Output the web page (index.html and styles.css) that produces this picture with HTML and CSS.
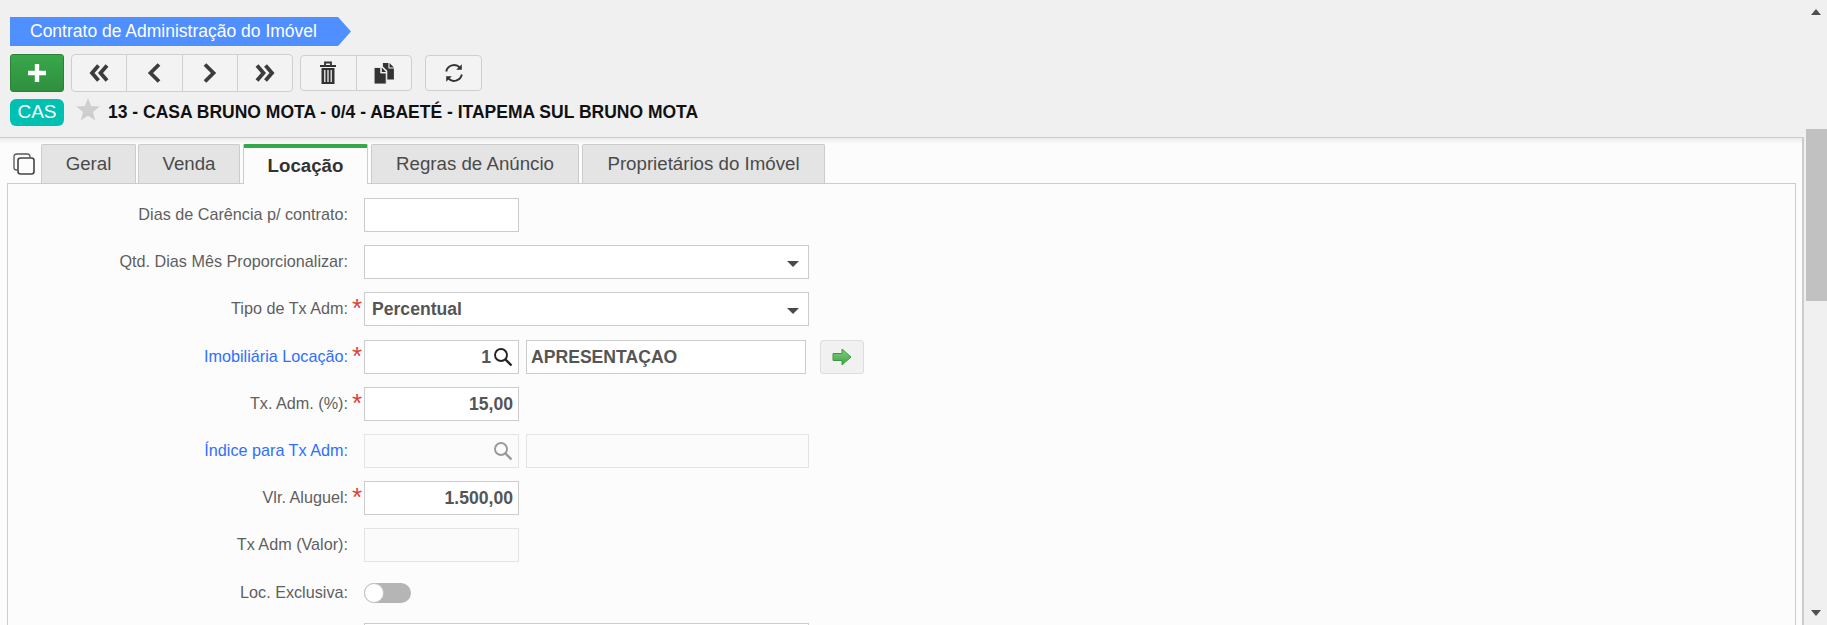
FILE: index.html
```html
<!DOCTYPE html>
<html lang="pt-BR">
<head>
<meta charset="utf-8">
<title>Contrato de Administração do Imóvel</title>
<link rel="stylesheet" href="styles.css">
</head>
<body>
<div class="page">
  <div class="main">
    <header class="header">
      <div class="ribbon">Contrato de Administração do Imóvel</div>
      <div class="toolbar">
        <button class="btn-add"><svg width="20" height="20" viewBox="0 0 20 20"><path d="M10 1v18M1 10h18" stroke="#fff" stroke-width="4.4" fill="none"/></svg></button>
        <div class="group group-nav">
          <button class="btn"><svg width="22" height="20" viewBox="0 0 22 20"><path d="M10.500 2.500 4 10l6.500 7.500M19 2.500 12.500 10l6.500 7.500" stroke="#3c3c3c" stroke-width="3.800" fill="none"/></svg></button>
          <button class="btn"><svg width="14" height="20" viewBox="0 0 14 20"><path d="M12 1.500 3.500 10l8.500 8.500" stroke="#3c3c3c" stroke-width="3.800" fill="none"/></svg></button>
          <button class="btn"><svg width="14" height="20" viewBox="0 0 14 20"><path d="M2 1.500 10.500 10 2 18.500" stroke="#3c3c3c" stroke-width="3.800" fill="none"/></svg></button>
          <button class="btn"><svg width="22" height="20" viewBox="0 0 22 20"><path d="M3 2.500 9.500 10 3 17.500M11.500 2.500 18 10l-6.500 7.500" stroke="#3c3c3c" stroke-width="3.800" fill="none"/></svg></button>
        </div>
        <div class="group group-edit">
          <button class="btn"><svg width="18" height="24" viewBox="0 0 18 24"><path d="M1 5h16M6 4.500V1.500h6v3" stroke="#333" stroke-width="1.800" fill="none"/><path d="M2.500 7h13v16h-13z" fill="#333"/><path d="M5.800 9v12M9 9v12M12.200 9v12" stroke="#f0f0f0" stroke-width="1.300"/></svg></button>
          <button class="btn"><svg width="22" height="22" viewBox="0 0 20 20"><path d="M9 1h5v5h5v10h-6V8L9 4z" fill="#333"/><path d="M15 1l4 4h-4z" fill="#333"/><path d="M1 5h6v5h5v10H1z" fill="#333" stroke="#f0f0f0" stroke-width=".8"/><path d="M8 5l4 4H8z" fill="#333"/></svg></button>
        </div>
        <div class="group group-refresh">
          <button class="btn"><svg width="20" height="20" viewBox="0 0 20 20"><path d="M2.200 8.500A8 8 0 0 1 16 4.800M17.800 11.500A8 8 0 0 1 4 15.200" stroke="#333" stroke-width="1.900" fill="none"/><path d="M17.800 1.200v5.600h-5.600zM2.200 18.800v-5.600h5.600z" fill="#333"/></svg></button>
        </div>
      </div>
      <div class="record">
        <span class="badge">CAS</span>
        <svg class="star" width="24" height="24" viewBox="0 0 24 24"><path d="m12 0 3.100 8.100 8.700.5-6.800 5.500 2.300 8.400L12 17.800l-7.300 4.700L7 14.100.2 8.600l8.700-.5z" fill="#cfcfcf"/></svg>
        <span class="record-title">13 - CASA BRUNO MOTA - 0/4 - ABAETÉ - ITAPEMA SUL BRUNO MOTA</span>
      </div>
    </header>
    <section class="content">
      <div class="tabs">
        <span class="tabs-icon"><svg width="22" height="22" viewBox="0 0 22 22"><path d="M4.500 17H3.500A2.500 2.500 0 0 1 1 14.500V3.500A2.500 2.500 0 0 1 3.500 1h11A2.500 2.500 0 0 1 17 3.500v1" stroke="#555" stroke-width="1.300" fill="none"/><rect x="5" y="5" width="16" height="16" rx="2.500" stroke="#444" stroke-width="1.600" fill="none"/></svg></span>
        <div class="tab t-geral">Geral</div>
        <div class="tab t-venda">Venda</div>
        <div class="tab tab-active t-loc">Locação</div>
        <div class="tab t-regras">Regras de Anúncio</div>
        <div class="tab t-prop">Proprietários do Imóvel</div>
      </div>
      <div class="panel">
        <div class="row"><div class="label">Dias de Carência p/ contrato:</div><div class="req"></div><div class="field short"></div></div>
        <div class="row"><div class="label">Qtd. Dias Mês Proporcionalizar:</div><div class="req"></div><div class="field select long"><span class="caret"></span></div></div>
        <div class="row"><div class="label">Tipo de Tx Adm:</div><div class="req">*</div><div class="field select long value">Percentual<span class="caret"></span></div></div>
        <div class="row"><div class="label link">Imobiliária Locação:</div><div class="req">*</div><div class="field short value right lookup">1<svg class="search" width="20" height="20" viewBox="0 0 20 20"><circle cx="8" cy="8" r="6" stroke="#222" stroke-width="1.900" fill="none"/><path d="m12.500 12.500 6 6" stroke="#222" stroke-width="2.400"/></svg></div><div class="field desc value upper">APRESENTAÇAO</div><button class="btn-go"><svg width="20" height="18" viewBox="0 0 20 18"><defs><linearGradient id="go" x1="0" y1="0" x2="0" y2="1"><stop offset="0" stop-color="#7fcf7a"/><stop offset="1" stop-color="#3fa34a"/></linearGradient></defs><path d="M1 5.500h9V1l9 8-9 8v-4.500H1z" fill="url(#go)" stroke="#3f9a3f"/></svg></button></div>
        <div class="row"><div class="label">Tx. Adm. (%):</div><div class="req">*</div><div class="field short value right">15,00</div></div>
        <div class="row"><div class="label link">Índice para Tx Adm:</div><div class="req"></div><div class="field short disabled lookup right"><svg class="search" width="20" height="20" viewBox="0 0 20 20"><circle cx="8" cy="8" r="6" stroke="#999" stroke-width="1.900" fill="none"/><path d="m12.500 12.500 6 6" stroke="#999" stroke-width="2.400"/></svg></div><div class="field desc-wide disabled"></div></div>
        <div class="row"><div class="label">Vlr. Aluguel:</div><div class="req">*</div><div class="field short value right">1.500,00</div></div>
        <div class="row"><div class="label">Tx Adm (Valor):</div><div class="req"></div><div class="field short disabled"></div></div>
        <div class="row"><div class="label">Loc. Exclusiva:</div><div class="req"></div><div class="toggle"><span class="knob"></span></div></div>
        <div class="row"><div class="label"></div><div class="req"></div><div class="field long"></div></div>
      </div>
    </section>
  </div>
  <aside class="scrollbar">
    <span class="arrow-up"></span>
    <span class="thumb"></span>
    <span class="arrow-down"></span>
  </aside>
</div>
</body>
</html>
```

FILE: styles.css
```css
* { box-sizing: border-box; }
html, body { margin: 0; height: 100%; overflow: hidden; }
body { font-family: "Liberation Sans", Arial, sans-serif; background: #f0f0f0; }
button { font: inherit; padding: 0; margin: 0; cursor: pointer; }
.page { display: flex; height: 625px; overflow: hidden; }
.main { width: 1806px; flex: none; display: flex; flex-direction: column; }

.header { height: 137px; flex: none; padding: 17px 0 0 10px; background: #f0f0f0; }
.ribbon {
  width: 341px; height: 29px; padding-left: 20px; line-height: 28px;
  font-size: 17.500px; color: #fff; background: #4f8fff; white-space: nowrap;
  clip-path: polygon(0 0, 328px 0, 100% 50%, 328px 100%, 0 100%);
}
.toolbar { display: flex; align-items: center; height: 38px; margin-top: 8px; }
.btn-add {
  width: 54px; height: 38px; border: 1px solid #2a8236; border-radius: 3px;
  background: linear-gradient(#38a849, #2f8f3e);
  display: flex; align-items: center; justify-content: center;
}
.group { display: flex; background: #f3f3f3; border: 1px solid #cfcfcf; border-radius: 4px; }
.group-nav { height: 38px; margin-left: 7px; width: 222px; }
.group-edit { height: 36px; margin-left: 7px; width: 112px; }
.group-refresh { height: 36px; margin-left: 13px; width: 57px; }
.btn {
  height: 100%; border: 0; border-right: 1px solid #cfcfcf; background: transparent;
  display: flex; align-items: center; justify-content: center; flex: 1 1 0;
}
.btn:last-child { border-right: 0; }

.record { display: flex; align-items: center; height: 27px; margin-top: 7px; }
.badge {
  width: 54px; height: 27px; line-height: 25px; text-align: center;
  background: #00c1b1; color: #fff; font-size: 19px; border-radius: 6px;
}
.star { margin-left: 12px; margin-top: -5px; flex: none; }
.record-title { margin-left: 8px; font-size: 17.500px; font-weight: 700; color: #111; white-space: nowrap; }

.content {
  flex: 1; min-height: 0; width: 1804px; background: #fcfcfc;
  border-top: 1px solid #ccc; border-right: 2px solid #ccc;
  padding: 6px 6px 0 7px; position: relative;
  overflow: hidden;
}
.content::before {
  content: ""; display: block; position: absolute; left: 0; right: 0; top: 0; height: 6px;
  background: linear-gradient(#ececec, #fcfcfc);
}
.tabs { display: flex; height: 39px; position: relative; align-items: flex-start; }
.tabs-icon { width: 34px; flex: none; padding: 0 0 0 6px; height: 40px; display: flex; align-items: center; }
.tab {
  height: 39px; line-height: 38px; text-align: center; font-size: 18.700px; color: #4a4a4a;
  background: #e4e4e4; border: 1px solid #ccc; border-bottom: 0; border-radius: 2px 2px 0 0;
  flex: none; white-space: nowrap;
}
.t-geral { width: 95px; }
.t-venda { width: 102px; margin-left: 2px; }
.t-loc { width: 125px; margin-left: 3px; }
.t-regras { width: 208px; margin-left: 3px; }
.t-prop { width: 243px; margin-left: 3px; }
.tab-active {
  background: #fcfcfc; border-top: 4px solid #35a84a; font-weight: 700; color: #333;
  line-height: 35px; height: 40px; position: relative; z-index: 1;
}
.panel {
  border: 1px solid #ccc; border-bottom: 0; width: 1789px; height: 442px;
  padding-top: 14px; background: #fcfcfc;
}
.row { display: flex; align-items: flex-start; height: 47.200px; }
.label { width: 340px; flex: none; text-align: right; font-size: 16.200px; line-height: 33px; color: #5f5f5f; white-space: nowrap; }
.link { color: #2f6fff; }
.req { width: 16px; flex: none; padding-left: 4px; color: #d9413a; font-size: 26px; line-height: 33px; }
.field {
  height: 34px; border: 1px solid #ccc; background: #fff; flex: none; position: relative;
  font-size: 17.600px; line-height: 32px; color: #555; padding: 0 5px 0 7px; white-space: nowrap;
}
.short { width: 155px; }
.long { width: 445px; }
.desc { width: 280px; margin-left: 7px; }
.desc-wide { width: 283px; margin-left: 7px; }
.value { font-weight: 700; }
.right { text-align: right; }
.lookup { padding-right: 27px; }
.search { position: absolute; right: 5px; top: 6px; }
.upper { padding-left: 4px; }
.disabled { background: #fbfbfb; border-color: #e4e4e4; }
.caret {
  position: absolute; right: 9px; top: 15px; width: 0; height: 0;
  border-left: 6px solid transparent; border-right: 6px solid transparent; border-top: 6px solid #4a4a4a;
}
.btn-go {
  width: 44px; height: 34px; margin-left: 14px; flex: none; border: 1px solid #ddd; border-radius: 3px;
  background: #f1f1f1; display: flex; align-items: center; justify-content: center;
}
.toggle { width: 47px; height: 20px; margin-top: 7px; border-radius: 10px; background: #b5b5b5; position: relative; flex: none; }
.knob { position: absolute; left: 0; top: 0; width: 20px; height: 20px; border-radius: 50%; background: #fff; border: 1px solid #c4c4c4; }

.scrollbar { flex: 1; position: relative; background: #f0f0f0; }
.thumb { position: absolute; left: 0; right: 0; top: 129px; height: 172px; background: #c1c1c1; }
.arrow-up, .arrow-down { position: absolute; left: 5px; width: 0; height: 0; border-left: 5.500px solid transparent; border-right: 5.500px solid transparent; }
.arrow-up { top: 9px; border-bottom: 6px solid #505050; }
.arrow-down { top: 610px; border-top: 6px solid #505050; }
```
